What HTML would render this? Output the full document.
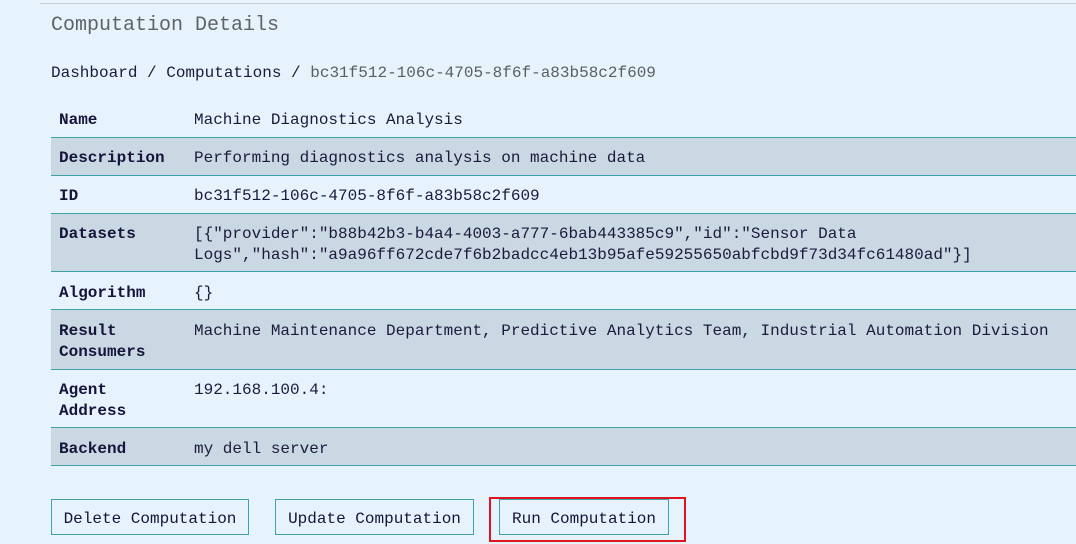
<!DOCTYPE html>
<html><head><meta charset="utf-8"><style>
body{margin:0;width:1076px;height:544px;background:#e6f3fd;font-family:"Liberation Mono",monospace;color:#1b1a3d;overflow:hidden;position:relative}
.top{position:absolute;left:40px;right:0;top:3px;height:1px;background:#c6cdd3}
.t{position:absolute;left:51px;top:14px;font-size:20px;color:#5f6266}
.bc{position:absolute;left:51px;top:64px;font-size:16px}
.bc span{color:#5a5d66}
.row{position:absolute;left:51px;right:0;border-bottom:1px solid #3fa3a8;font-size:16px;line-height:21px}
.row.s{background:#c9d8e3}
.row b{position:absolute;left:8px;font-weight:bold;color:#16143a}
.row div{position:absolute;left:143px;right:0}
.btn{position:absolute;top:499px;height:36px;border:1px solid #3fa3a8;box-sizing:border-box;font-size:16px;line-height:38px;text-align:center;color:#16143a}
.red{position:absolute;left:489px;top:497px;width:197px;height:45px;border:2px solid #e0141e;box-sizing:border-box}
</style></head><body>
<div class="top"></div>
<div class="t">Computation Details</div>
<div class="bc">Dashboard / Computations / <span>bc31f512-106c-4705-8f6f-a83b58c2f609</span></div>

<div class="row" style="top:100px;height:37px"><b style="top:10px">Name</b><div style="top:10px">Machine Diagnostics Analysis</div></div>
<div class="row s" style="top:138px;height:37px"><b style="top:10px">Description</b><div style="top:10px">Performing diagnostics analysis on machine data</div></div>
<div class="row" style="top:176px;height:37px"><b style="top:10px">ID</b><div style="top:10px">bc31f512-106c-4705-8f6f-a83b58c2f609</div></div>
<div class="row s" style="top:214px;height:57px"><b style="top:10px">Datasets</b><div style="top:10px">[{"provider":"b88b42b3-b4a4-4003-a777-6bab443385c9","id":"Sensor Data<br>Logs","hash":"a9a96ff672cde7f6b2badcc4eb13b95afe59255650abfcbd9f73d34fc61480ad"}]</div></div>
<div class="row" style="top:272px;height:37px"><b style="top:11px">Algorithm</b><div style="top:11px">{}</div></div>
<div class="row s" style="top:310px;height:59px"><b style="top:11px">Result<br>Consumers</b><div style="top:11px">Machine Maintenance Department, Predictive Analytics Team, Industrial Automation Division</div></div>
<div class="row" style="top:370px;height:57px"><b style="top:10px">Agent<br>Address</b><div style="top:10px">192.168.100.4:</div></div>
<div class="row s" style="top:428px;height:37px"><b style="top:11px">Backend</b><div style="top:11px">my dell server</div></div>

<div class="btn" style="left:51px;width:198px">Delete Computation</div>
<div class="btn" style="left:275px;width:199px">Update Computation</div>
<div class="btn" style="left:499px;width:170px">Run Computation</div>
<div class="red"></div>
</body></html>
